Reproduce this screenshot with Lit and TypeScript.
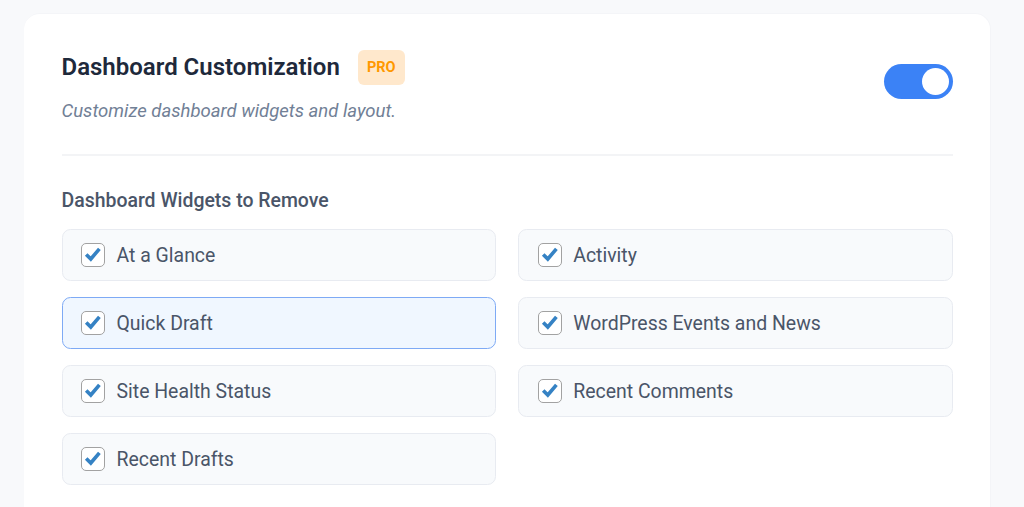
import { LitElement, html, css } from "lit";
import { customElement, state } from "lit/decorators.js";
import { classMap } from "lit/directives/class-map.js";

const WIDGETS = [
  "At a Glance",
  "Activity",
  "Quick Draft",
  "WordPress Events and News",
  "Site Health Status",
  "Recent Comments",
  "Recent Drafts",
];

@customElement("app-root")
export class AppRoot extends LitElement {
  @state() focused = "Quick Draft";

  static styles = css`
    :host {
      display: block;
      height: 507px;
      overflow: hidden;
      background: #f8f9fb;
      font-family: Roboto, "Liberation Sans", sans-serif;
    }

    .card {
      margin: 13px 33px 0 24px;
      padding: 36px 37px 40px 37.5px;
      background: #fff;
      border: 1px solid #f4f5f8;
      border-left-width: 0;
      border-radius: 16px;
    }

    .header {
      display: flex;
      align-items: flex-start;
      justify-content: space-between;
      padding-bottom: 29px;
      border-bottom: 2px solid #f3f4f6;
    }

    .title-row {
      display: flex;
      align-items: center;
      gap: 18px;
    }

    h2 {
      margin: -2px 0 0;
      font-size: 24px;
      line-height: 36px;
      font-weight: 600;
      color: #1e293b;
    }

    .badge {
      display: flex;
      align-items: center;
      justify-content: center;
      width: 47px;
      height: 35px;
      border-radius: 6px;
      background: #ffe8cc;
      color: #ff9800;
      font-size: 14.5px;
      font-weight: 700;
    }

    .desc {
      margin: 13px 0 0;
      font-size: 18.55px;
      line-height: 27px;
      font-style: italic;
      color: #718096;
    }

    .toggle {
      display: flex;
      justify-content: flex-end;
      align-items: center;
      width: 69px;
      height: 35px;
      margin-top: 14px;
      box-sizing: border-box;
      padding-right: 4px;
      border-radius: 18px;
      background: #3b82f6;
    }

    .knob {
      width: 27px;
      height: 27px;
      border-radius: 50%;
      background: #fff;
    }

    h3 {
      margin: 31px 0 15px;
      font-size: 19.45px;
      line-height: 27px;
      font-weight: 500;
      color: #4a5568;
    }

    .grid {
      display: grid;
      grid-template-columns: 1fr 1fr;
      column-gap: 22px;
      row-gap: 15.6px;
    }

    .item {
      display: flex;
      align-items: center;
      gap: 11.5px;
      height: 52.4px;
      box-sizing: border-box;
      padding: 0 18.5px;
      background: #f8fafc;
      border: 1px solid #e8ebf1;
      border-radius: 8.5px;
      font-size: 19.45px;
      color: #4a5568;
    }

    .item.focused {
      background: #f0f7ff;
      border-color: #7eaaf5;
    }

    .box {
      display: flex;
      align-items: center;
      justify-content: center;
      width: 24px;
      height: 24px;
      box-sizing: border-box;
      background: #fff;
      border: 1.5px solid #a2a2a2;
      border-radius: 5px;
    }

    .box svg {
      display: block;
      width: 18px;
      height: 18px;
    }
  `;

  render() {
    return html`
      <div class="card">
        <div class="header">
          <div>
            <div class="title-row">
              <h2>Dashboard Customization</h2>
              <span class="badge">PRO</span>
            </div>
            <p class="desc">Customize dashboard widgets and layout.</p>
          </div>
          <div class="toggle"><span class="knob"></span></div>
        </div>
        <h3>Dashboard Widgets to Remove</h3>
        <div class="grid">
          ${WIDGETS.map(
            (name) => html`
              <label class=${classMap({ item: true, focused: name === this.focused })}>
                <span class="box">
                  <svg viewBox="0 0 18 18">
                    <path d="M2.2 8.4 L6.8 13 L15.4 2.8" fill="none" stroke="#3582c4" stroke-width="3.6" />
                  </svg>
                </span>
                ${name}
              </label>
            `
          )}
        </div>
      </div>
    `;
  }
}
